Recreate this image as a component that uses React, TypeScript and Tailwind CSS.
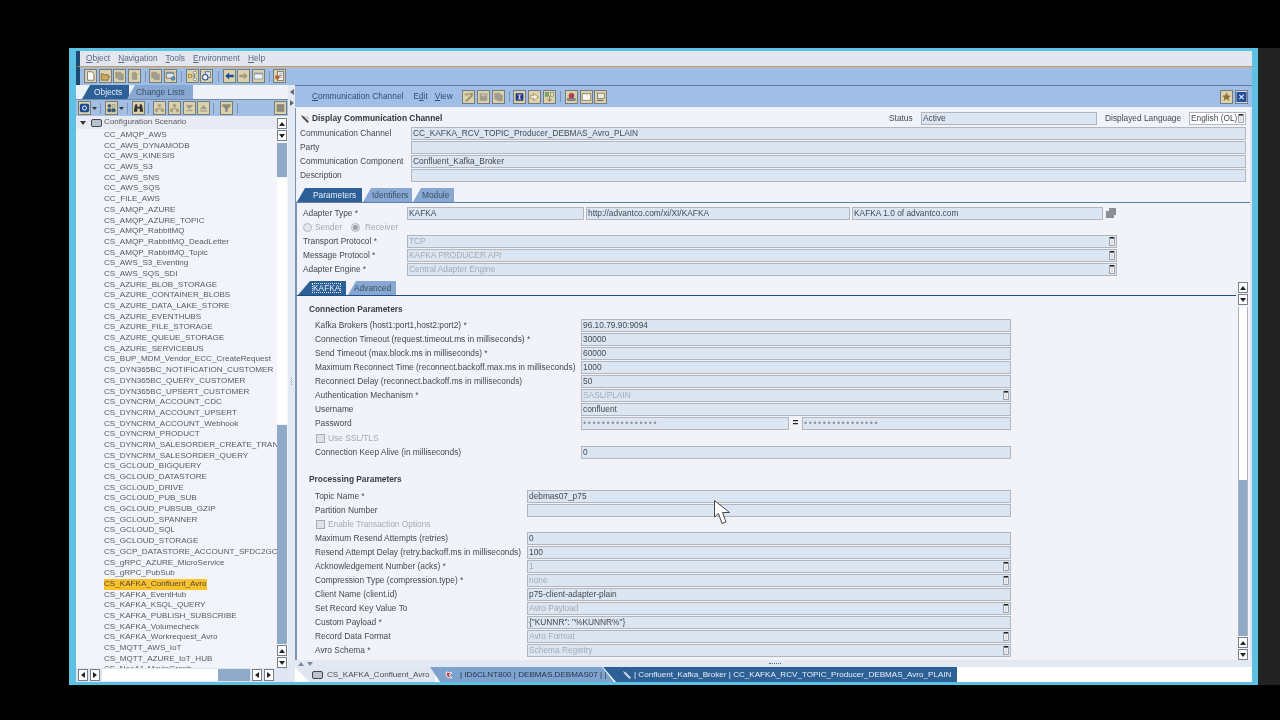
import type { ReactNode } from 'react'

const treeItems = [
  'CC_AMQP_AWS', 'CC_AWS_DYNAMODB', 'CC_AWS_KINESIS', 'CC_AWS_S3', 'CC_AWS_SNS', 'CC_AWS_SQS', 'CC_FILE_AWS',
  'CS_AMQP_AZURE', 'CS_AMQP_AZURE_TOPIC', 'CS_AMQP_RabbitMQ', 'CS_AMQP_RabbitMQ_DeadLetter', 'CS_AMQP_RabbitMQ_Topic',
  'CS_AWS_S3_Eventing', 'CS_AWS_SQS_SDI', 'CS_AZURE_BLOB_STORAGE', 'CS_AZURE_CONTAINER_BLOBS', 'CS_AZURE_DATA_LAKE_STORE',
  'CS_AZURE_EVENTHUBS', 'CS_AZURE_FILE_STORAGE', 'CS_AZURE_QUEUE_STORAGE', 'CS_AZURE_SERVICEBUS',
  'CS_BUP_MDM_Vendor_ECC_CreateRequest', 'CS_DYN365BC_NOTIFICATION_CUSTOMER', 'CS_DYN365BC_QUERY_CUSTOMER',
  'CS_DYN365BC_UPSERT_CUSTOMER', 'CS_DYNCRM_ACCOUNT_CDC', 'CS_DYNCRM_ACCOUNT_UPSERT', 'CS_DYNCRM_ACCOUNT_Webhook',
  'CS_DYNCRM_PRODUCT', 'CS_DYNCRM_SALESORDER_CREATE_TRAN', 'CS_DYNCRM_SALESORDER_QUERY', 'CS_GCLOUD_BIGQUERY',
  'CS_GCLOUD_DATASTORE', 'CS_GCLOUD_DRIVE', 'CS_GCLOUD_PUB_SUB', 'CS_GCLOUD_PUBSUB_GZIP', 'CS_GCLOUD_SPANNER',
  'CS_GCLOUD_SQL', 'CS_GCLOUD_STORAGE', 'CS_GCP_DATASTORE_ACCOUNT_SFDC2GC', 'CS_gRPC_AZURE_MicroService', 'CS_gRPC_PubSub',
  'CS_KAFKA_Confluent_Avro', 'CS_KAFKA_EventHub', 'CS_KAFKA_KSQL_QUERY', 'CS_KAFKA_PUBLISH_SUBSCRIBE', 'CS_KAFKA_Volumecheck',
  'CS_KAFKA_Workrequest_Avro', 'CS_MQTT_AWS_IoT', 'CS_MQTT_AZURE_IoT_HUB', 'CS_Neo4J_MovieGraph',
]

const connectionRows = [
  { label: 'Kafka Brokers (host1:port1,host2:port2) *', value: '96.10.79.90:9094' },
  { label: 'Connection Timeout (request.timeout.ms in milliseconds) *', value: '30000' },
  { label: 'Send Timeout (max.block.ms in milliseconds) *', value: '60000' },
  { label: 'Maximum Reconnect Time (reconnect.backoff.max.ms in milliseconds)', value: '1000' },
  { label: 'Reconnect Delay (reconnect.backoff.ms in milliseconds)', value: '50' },
  { label: 'Authentication Mechanism *', value: 'SASL/PLAIN', disabled: true },
  { label: 'Username', value: 'confluent' },
]

const processingRows = [
  { label: 'Maximum Resend Attempts (retries)', value: '0' },
  { label: 'Resend Attempt Delay (retry.backoff.ms in milliseconds)', value: '100' },
  { label: 'Acknowledgement Number (acks) *', value: '1', disabled: true },
  { label: 'Compression Type (compression.type) *', value: 'none', disabled: true },
  { label: 'Client Name (client.id)', value: 'p75-client-adapter-plain' },
  { label: 'Set Record Key Value To', value: 'Avro Payload', disabled: true },
  { label: 'Custom Payload *', value: '{"KUNNR": "%KUNNR%"}' },
  { label: 'Record Data Format', value: 'Avro Format', disabled: true },
  { label: 'Avro Schema *', value: 'Schema Registry', disabled: true },
]

const icons = {
  page: <path d="M3 1.500h5l2.500 2.500v7.500H3z" fill="#fff" stroke="#555" strokeWidth="0.8" />,
  folder: <path d="M1.500 4h3l1 1h4v2h2l-2 4.500H1.500z" fill="#c9a860" stroke="#6b5a35" strokeWidth="0.8" />,
  copy: <path d="M2 2h6v2h3v7H5V9H2z" fill="#a09c8e" stroke="#918d80" strokeWidth="0.6" />,
  trash: <path d="M3 3h7v1H9.500v7h-6V4H3zM5 1.500h3V3H5z" fill="#a09c8e" />,
  copyX: (
    <>
      <rect x="1.500" y="2" width="9" height="7" fill="#dfe6ee" stroke="#555" strokeWidth="0.8" />
      <rect x="1.500" y="2" width="9" height="2" fill="#7f8f9f" />
      <circle cx="9.500" cy="9.500" r="2.500" fill="#2b5fa5" />
      <path d="M8.400 8.400l2.200 2.200M10.600 8.400l-2.200 2.200" stroke="#fff" strokeWidth="0.7" />
    </>
  ),
  tree: (
    <>
      <rect x="1.500" y="4.500" width="4" height="4" fill="#f3d268" stroke="#7a6a35" strokeWidth="0.7" />
      <path d="M6 6.500h3M9 3v7" stroke="#666" strokeWidth="0.8" />
      <rect x="8" y="1.500" width="3.500" height="2.500" fill="#fff" stroke="#555" strokeWidth="0.6" />
      <rect x="8" y="9" width="3.500" height="2.500" fill="#fff" stroke="#555" strokeWidth="0.6" />
    </>
  ),
  cycleDoc: (
    <>
      <rect x="5" y="1.500" width="6" height="7" fill="#dfe8f3" stroke="#31588c" strokeWidth="0.8" />
      <circle cx="5" cy="8" r="3.200" fill="#fff" stroke="#1f4f93" strokeWidth="1.200" />
    </>
  ),
  left: <path d="M1.500 6.500L6 2.500v2.500h5.500v3H6v2.500z" fill="#1d4f9c" />,
  right: <path d="M11.500 6.500L7 2.500v2.500H1.500v3H7v2.500z" fill="#a49b82" />,
  window: (
    <>
      <rect x="1.500" y="3" width="10" height="7" fill="#eef2f7" stroke="#7e8c9c" strokeWidth="0.8" />
      <rect x="1.500" y="3" width="10" height="1.600" fill="#7e9ec4" />
    </>
  ),
  form: (
    <>
      <rect x="4" y="1.500" width="7.500" height="10" fill="#fff" stroke="#444" strokeWidth="0.8" />
      <path d="M6 4h4M6 6h4M6 8h4" stroke="#444" strokeWidth="0.7" />
      <circle cx="4" cy="8" r="2.600" fill="#b8632c" />
    </>
  ),
  refresh: (
    <>
      <rect x="1" y="1.500" width="11" height="10" rx="2" fill="#1d4a94" />
      <circle cx="6.500" cy="6.500" r="2.400" fill="none" stroke="#fff" strokeWidth="1.100" />
    </>
  ),
  people: (
    <>
      <circle cx="4" cy="4" r="1.800" fill="#2b5c8f" stroke="#333" strokeWidth="0.4" />
      <circle cx="9" cy="4" r="1.800" fill="#e6e2d0" stroke="#333" strokeWidth="0.5" />
      <path d="M2 11V7.500h4V11zM7 11V7.500h4V11z" fill="#2b5c8f" stroke="#333" strokeWidth="0.4" />
    </>
  ),
  binoculars: <path d="M2 4l1-2h2v3h3V2h2l1 2 1 7H8V7H5v4H1z" fill="#333" />,
  hierarchy: <path d="M5 2h3v3H5zM1.500 8h3v3h-3zM8.500 8h3v3h-3zM6.500 5v2M3 8V7h7v1" fill="#a49b82" stroke="#a49b82" strokeWidth="0.5" />,
  down: (
    <>
      <path d="M2 3h9L6.500 8z" fill="#a09c8e" />
      <path d="M3 9.500h7" stroke="#a09c8e" strokeWidth="1.400" />
    </>
  ),
  up: (
    <>
      <path d="M2 8h9L6.500 3z" fill="#a09c8e" />
      <path d="M2 10h9" stroke="#a09c8e" strokeWidth="1.400" />
    </>
  ),
  filter: <path d="M1.500 2h10v2L8 7.500V11H5V7.500L1.500 4z" fill="#8d8a7e" />,
  stop: <rect x="2" y="2" width="9" height="9" fill="#8d8a80" />,
  pencil: <path d="M2 3.500l4-1 1 1-3.500 1zM3 11l7-7.500 1.500 1.500L4.500 12zM8 2h3.500v1.400H8z" fill="#a39a7a" stroke="#7d7458" strokeWidth="0.4" />,
  save: (
    <>
      <rect x="2" y="2" width="9" height="9" fill="#a09c8e" />
      <rect x="4" y="2.500" width="5" height="3" fill="#c3bfb0" />
    </>
  ),
  info: <path d="M2 2h9v9H2z M4 3.500v1h1.500v4H4v1h5v-1H7.500v-4H9v-1z" fill="#142e8c" fillRule="evenodd" />,
  link: <path d="M1.500 5h4V2.500L11 6.500l-5.500 4V8h-4z" fill="#fdf7e0" stroke="#7a6a35" strokeWidth="0.7" />,
  swap: (
    <>
      <rect x="1.500" y="1.500" width="4" height="4" fill="#79b06f" stroke="#3e6c3a" strokeWidth="0.5" />
      <rect x="7.500" y="1.500" width="4" height="4" fill="#dbe6a8" stroke="#555" strokeWidth="0.5" />
      <path d="M6.500 6v5M4 9l2.500 2.500L9 9" fill="none" stroke="#555" strokeWidth="0.8" />
    </>
  ),
  stamp: (
    <>
      <circle cx="6.500" cy="5" r="3" fill="#bc3f4f" stroke="#5c2130" strokeWidth="0.5" />
      <rect x="2" y="8" width="9" height="3" fill="#8c8f9c" stroke="#444" strokeWidth="0.4" />
    </>
  ),
  book: <path d="M1.500 2.500h4.500l.5 1 .5-1h4.500v8H7l-.5 .6-.5-.6H1.500z" fill="#fffdf0" stroke="#444" strokeWidth="0.7" />,
  note: (
    <>
      <rect x="3" y="2" width="8" height="6.500" fill="#e9eadd" stroke="#555" strokeWidth="0.7" />
      <path d="M2 10.500h8" stroke="#555" strokeWidth="1.100" />
    </>
  ),
  star: <path d="M6.500 1l1.500 3.600 3.700.3-2.800 2.400.9 3.700-3.300-2-3.300 2 .9-3.700L1.300 4.900 5 4.600z" fill="#8f6f3c" />,
  close: (
    <>
      <rect x="0.500" y="0.500" width="12" height="12" fill="#234f9b" />
      <path d="M4 4l5 5M9 4l-5 5" stroke="#e6eef8" strokeWidth="1.400" />
    </>
  ),
}

function Btn({ icon, className = '' }: { icon: ReactNode; className?: string }) {
  return (
    <div className={`w-[13px] h-[14px] shrink-0 border border-[#747c80] bg-[#dbd1aa] ${className}`}>
      <svg viewBox="0 0 13 13" className="w-full h-full block">{icon}</svg>
    </div>
  )
}

function Sep({ className = '' }: { className?: string }) {
  return <div className={`w-px h-[11px] bg-[#7e96b5] shrink-0 ${className}`}></div>
}

function Arrow({ up }: { up?: boolean }) {
  return (
    <div className="w-[10px] h-[11px] shrink-0 bg-white border border-[#77818d] flex items-center justify-center">
      <svg viewBox="0 0 6 4" className="w-[6px] h-[4px]">
        <path d={up ? 'M0 4L3 0l3 4z' : 'M0 0l3 4 3-4z'} fill="#222" />
      </svg>
    </div>
  )
}

function SideArrow({ right, className = '' }: { right?: boolean; className?: string }) {
  return (
    <div className={`w-[10px] h-[12px] shrink-0 bg-white border border-[#77818d] flex items-center justify-center ${className}`}>
      <svg viewBox="0 0 4 6" className="w-[4px] h-[6px]">
        <path d={right ? 'M0 0l4 3-4 3z' : 'M4 0L0 3l4 3z'} fill="#222" />
      </svg>
    </div>
  )
}

function DropIcon() {
  return (
    <svg viewBox="0 0 6 9" className="w-[6px] h-[9px] block">
      <rect x="0.500" y="0.500" width="5" height="8" fill="#eef1f4" stroke="#8a8f96" strokeWidth="0.8" />
      <rect x="1" y="0" width="4" height="1.600" fill="#222" />
      <path d="M2 4h2M2 6h2" stroke="#a9adb3" strokeWidth="0.6" />
    </svg>
  )
}

function Field({ value, className = '', disabled, drop, dotted }: {
  value?: string
  className?: string
  disabled?: boolean
  drop?: boolean
  dotted?: boolean
}) {
  return (
    <div className={`h-[13px] shrink-0 border border-[#b1b6bf] bg-[#dce6f3] flex items-center pl-px pr-px overflow-hidden whitespace-nowrap ${disabled ? 'text-[#a4aab3]' : 'text-[#45494f]'} ${className}`}>
      {dotted ? <span className="text-[#8f959e] tracking-[1.55px] text-[9px]">{value}</span> : <span className="leading-[11px]">{value}</span>}
      {drop && <span className="ml-auto shrink-0"><DropIcon /></span>}
    </div>
  )
}

function Tab({ label, className, textClass, width, pad }: {
  label: string
  className: string
  textClass: string
  width: string
  pad: string
}) {
  return (
    <div className={`h-full shrink-0 flex items-center [clip-path:polygon(8px_0,100%_0,100%_100%,0_100%)] ${className} ${width} ${pad}`}>
      <span className={textClass}>{label}</span>
    </div>
  )
}

function Row({ label, labelWidth, children, className = '' }: {
  label: string
  labelWidth: string
  children: ReactNode
  className?: string
}) {
  return (
    <div className={`h-[14px] flex items-center whitespace-nowrap ${className}`}>
      <div className={`shrink-0 leading-[12px] ${labelWidth}`}>{label}</div>
      {children}
    </div>
  )
}

function CheckRow({ label, className = '' }: { label: string; className?: string }) {
  return (
    <div className={`h-[14px] flex items-center pl-px text-[#a4aab3] ${className}`}>
      <div className="w-[9px] h-[9px] mr-[3px] border border-[#a9adb3] bg-[#dfe1e6]"></div>
      {label}
    </div>
  )
}

function Tree() {
  return (
    <div className="flex-1 min-h-0 flex bg-[#f2f4f9]">
      <div className="flex-1 min-w-0 overflow-hidden text-[#555b62] text-[8.1px]">
        <div className="h-[13px] mb-px flex items-center pl-[4px] bg-[#e8ebf3]">
          <svg viewBox="0 0 6 4" className="w-[6px] h-[4px] mr-[5px]"><path d="M0 0h6L3 4z" fill="#333" /></svg>
          <svg viewBox="0 0 11 8" className="w-[11px] h-[8px] mr-[2px]">
            <rect x="0.500" y="0.500" width="10" height="7" rx="1.500" fill="#b9c3cf" stroke="#444" />
          </svg>
          Configuration Scenario
        </div>
        {treeItems.map((item) => (
          <div key={item} className="h-[10.69px] flex items-center pl-[28px] whitespace-nowrap">
            <span className={item === 'CS_KAFKA_Confluent_Avro' ? 'bg-[#fcc22c] text-[#4a4a3a] pr-[1px] leading-[10.69px]' : 'leading-[10.69px]'}>{item}</span>
          </div>
        ))}
      </div>
      <div className="w-[11px] shrink-0 flex flex-col pt-[2px] gap-px">
        <Arrow up />
        <Arrow />
        <div className="h-[34px] w-[10px] bg-[#8fa9c8] mt-[1px] shrink-0"></div>
        <div className="h-[246px] w-[10px] bg-white shrink-0"></div>
        <div className="flex-1 w-[10px] bg-[#8fa9c8]"></div>
        <Arrow up />
        <Arrow />
      </div>
    </div>
  )
}

function LeftPanel() {
  return (
    <div className="w-[212px] shrink-0 flex flex-col bg-[#dfe6f1]">
      <div className="h-[14px] pl-[6px] flex bg-[#eef1f7] text-white">
        <Tab label="Objects" className="bg-[#2c6097]" textClass="text-[#e8eff7]" width="w-[47px]" pad="pl-[12px]" />
        <Tab label="Change Lists" className="bg-[#86a8d2] -ml-[2px]" textClass="text-[#3d4f66]" width="w-[66px]" pad="pl-[9px]" />
      </div>
      <div className="h-[17px] bg-[#a3c0e4] flex items-center pl-[2px] border-t border-[#6f8cb0]">
        <Btn icon={icons.refresh} />
        <svg viewBox="0 0 5 3" className="w-[5px] h-[3px] ml-px"><path d="M0 0h5L2.500 3z" fill="#333" /></svg>
        <Sep className="ml-[3px]" />
        <Btn icon={icons.people} className="ml-[4px]" />
        <svg viewBox="0 0 5 3" className="w-[5px] h-[3px] ml-px"><path d="M0 0h5L2.500 3z" fill="#333" /></svg>
        <Sep className="ml-[3px]" />
        <Btn icon={icons.binoculars} className="ml-[4px]" />
        <Sep className="ml-[3px]" />
        <Btn icon={icons.hierarchy} className="ml-[4px]" />
        <Btn icon={icons.hierarchy} className="ml-[2px]" />
        <Btn icon={icons.down} className="ml-[2px]" />
        <Btn icon={icons.up} className="ml-[1px]" />
        <Sep className="ml-[3px]" />
        <Btn icon={icons.filter} className="ml-[6px]" />
        <Sep className="ml-[4px]" />
        <Btn icon={icons.stop} className="ml-auto mr-[1px]" />
      </div>
      <Tree />
      <div className="h-[14px] shrink-0 flex items-center pl-[2px] bg-[#dfe6f1]">
        <SideArrow />
        <SideArrow right className="ml-[2px]" />
        <div className="flex ml-[2px] h-[12px] w-[148px]">
          <div className="w-[116px] bg-white"></div>
          <div className="flex-1 bg-[#8fa9c8]"></div>
        </div>
        <SideArrow className="ml-[2px]" />
        <SideArrow right className="ml-[2px]" />
      </div>
    </div>
  )
}

function Divider() {
  return (
    <div className="w-[7px] shrink-0 bg-[#e3e9f3] flex flex-col items-center pt-[4px]">
      <svg viewBox="0 0 4 6" className="w-[4px] h-[6px]"><path d="M4 0L0 3l4 3z" fill="#666" /></svg>
      <svg viewBox="0 0 4 6" className="w-[4px] h-[6px] mt-[5px]"><path d="M0 0l4 3-4 3z" fill="#666" /></svg>
      <div className="mt-[272px] flex flex-col gap-px">
        <div className="w-px h-px bg-[#8a97a8]"></div>
        <div className="w-px h-px bg-[#8a97a8]"></div>
        <div className="w-px h-px bg-[#8a97a8]"></div>
        <div className="w-px h-px bg-[#8a97a8]"></div>
      </div>
    </div>
  )
}

function MenuText({ text }: { text: string }) {
  return (
    <span>
      <span className="underline">{text[0]}</span>
      {text.slice(1)}
    </span>
  )
}

function RightHeader() {
  return (
    <div className="h-[22px] shrink-0 bg-[#a1bfe6] border-t border-[#5f7ea8] flex items-center text-[#2f4d7a]">
      <div className="ml-[17px] w-[150px] flex gap-[10px]">
        <span><span className="underline">C</span>ommunication Channel</span>
        <span>E<span className="underline">d</span>it</span>
        <span className="-ml-[3px]"><MenuText text="View" /></span>
      </div>
      <Btn icon={icons.pencil} />
      <Btn icon={icons.save} className="ml-[2px] bg-[#c5c0ab]" />
      <Btn icon={icons.copy} className="ml-[2px]" />
      <Sep className="ml-[4px]" />
      <Btn icon={icons.info} className="ml-[3px]" />
      <Btn icon={icons.link} className="ml-[2px]" />
      <Btn icon={icons.swap} className="ml-[2px]" />
      <Sep className="ml-[4px]" />
      <Btn icon={icons.stamp} className="ml-[4px]" />
      <Btn icon={icons.book} className="ml-[2px]" />
      <Btn icon={icons.note} className="ml-[1px]" />
      <Btn icon={icons.star} className="ml-auto" />
      <Btn icon={icons.close} className="ml-[2px] mr-[4px] bg-[#dfe6f1]" />
    </div>
  )
}

function FormScroller() {
  return (
    <div className="flex-1 min-h-0 flex mt-[5px]">
      <div className="flex-1 min-w-0 flex flex-col">
        <div className="h-[14px] shrink-0 pl-[1px] flex">
          <div className="w-[48px] h-full flex items-center pl-[15px] bg-[#2c6097] text-[#e8eff7] [clip-path:polygon(12px_0,100%_0,100%_100%,0_100%)]">
            <span className="outline outline-1 outline-dotted outline-[#dfe8f3]">KAFKA</span>
          </div>
          <Tab label="Advanced" className="bg-[#86a8d2] ml-[2px]" textClass="text-[#3d4f66]" width="w-[48px]" pad="pl-[6px]" />
        </div>
        <div className="h-px shrink-0 bg-[#1e4c86]"></div>
        <div className="flex-1 min-h-0 overflow-hidden pl-[12px] pt-[6px] text-[#45494f]">
          <div className="h-[14px] flex items-center font-bold text-[#3a3d42]">Connection Parameters</div>
          <div className="pl-[6px] mt-[2px]">
            {connectionRows.map((r) => (
              <Row key={r.label} label={r.label} labelWidth="w-[266px]">
                <Field value={r.value} disabled={r.disabled} drop={r.disabled} className="w-[430px]" />
              </Row>
            ))}
            <Row label="Password" labelWidth="w-[266px]">
              <Field value="••••••••••••••••" dotted className="w-[208px]" />
              <span className="w-[13px] text-center font-bold text-[#222] text-[10px]">=</span>
              <Field value="••••••••••••••••" dotted className="w-[209px]" />
            </Row>
            <CheckRow label="Use SSL/TLS" className="mt-px" />
            <Row label="Connection Keep Alive (in milliseconds)" labelWidth="w-[266px]">
              <Field value="0" className="w-[430px]" />
            </Row>
          </div>
          <div className="h-[15px] mt-[13px] flex items-center font-bold text-[#3a3d42]">Processing Parameters</div>
          <div className="pl-[6px] mt-[2px]">
            <Row label="Topic Name *" labelWidth="w-[212px]">
              <Field value="debmas07_p75" className="w-[484px]" />
            </Row>
            <Row label="Partition Number" labelWidth="w-[212px]">
              <Field className="w-[484px]" />
            </Row>
            <CheckRow label="Enable Transaction Options" />
            {processingRows.map((r) => (
              <Row key={r.label} label={r.label} labelWidth="w-[212px]">
                <Field value={r.value} disabled={r.disabled} drop={r.disabled} className="w-[484px]" />
              </Row>
            ))}
          </div>
        </div>
      </div>
      <div className="w-[10px] shrink-0 ml-[2px] mr-[2px] pt-px flex flex-col gap-px">
        <Arrow up />
        <Arrow />
        <div className="flex-1 min-h-0 flex flex-col bg-white border-x border-[#aab2bd] mt-px">
          <div className="mt-auto h-[156px] bg-[#8fa9c8]"></div>
        </div>
        <Arrow up />
        <Arrow />
      </div>
    </div>
  )
}

function RightBody() {
  return (
    <div className="h-[552px] shrink-0 flex flex-col bg-[#f1f3f9] border-l border-[#7c93b2] mr-[2px] pt-[3px]">
      <div className="pl-[4px] pr-[4px]">
        <div className="h-[15px] flex items-center whitespace-nowrap">
          <svg viewBox="0 0 10 10" className="w-[10px] h-[10px] mr-[2px] shrink-0">
            <path d="M1 1l3 1.500 5 5-1.500 1.500-5-5z" fill="#555" />
            <path d="M6 2l3 3" stroke="#99a" strokeWidth="1" />
          </svg>
          <span className="w-[577px] font-bold text-[#33363a]">Display Communication Channel</span>
          <span className="w-[32px]">Status</span>
          <Field value="Active" className="w-[176px]" />
          <span className="w-[84px] ml-[8px]">Displayed Language</span>
          <Field value="English (OL)" drop className="w-[57px] bg-white" />
        </div>
        <Row label="Communication Channel" labelWidth="w-[111px]">
          <Field value="CC_KAFKA_RCV_TOPIC_Producer_DEBMAS_Avro_PLAIN" className="flex-1" />
        </Row>
        <Row label="Party" labelWidth="w-[111px]">
          <Field className="flex-1" />
        </Row>
        <Row label="Communication Component" labelWidth="w-[111px]">
          <Field value="Confluent_Kafka_Broker" className="flex-1" />
        </Row>
        <Row label="Description" labelWidth="w-[111px]">
          <Field className="flex-1" />
        </Row>
      </div>
      <div className="h-[14px] shrink-0 mt-[6px] pl-[1px] flex">
        <Tab label="Parameters" className="bg-[#2c6097]" textClass="text-[#e8eff7]" width="w-[65px]" pad="pl-[16px]" />
        <Tab label="Identifiers" className="bg-[#86a8d2] ml-px" textClass="text-[#3d4f66]" width="w-[49px]" pad="pl-[9px]" />
        <Tab label="Module" className="bg-[#86a8d2] ml-px" textClass="text-[#3d4f66]" width="w-[41px]" pad="pl-[9px]" />
      </div>
      <div className="h-px shrink-0 bg-[#5d7ea8]"></div>
      <div className="flex-1 min-h-0 flex flex-col border-l-2 border-[#7c93b2] -ml-px">
        <div className="pl-[6px] pt-[3px]">
          <Row label="Adapter Type *" labelWidth="w-[104px]">
            <Field value="KAFKA" className="w-[177px] bg-[#d8e5f0]" />
            <Field value="http://advantco.com/xi/XI/KAFKA" className="w-[264px] ml-[2px] bg-[#d8e5f0]" />
            <Field value="KAFKA 1.0 of advantco.com" className="w-[251px] ml-[2px] bg-[#d8e5f0]" />
            <svg viewBox="0 0 10 10" className="w-[10px] h-[10px] ml-[3px]">
              <path d="M3 0h7v7H8v3H0V3h3z" fill="#8a8f96" />
            </svg>
          </Row>
          <div className="h-[14px] flex items-center text-[#a4aab3]">
            <div className="w-[9px] h-[9px] rounded-full border border-[#b2b6bd] bg-[#e6e8ee]"></div>
            <span className="ml-[3px] w-[36px]">Sender</span>
            <div className="w-[9px] h-[9px] rounded-full border border-[#b2b6bd] bg-[#e6e8ee] flex items-center justify-center">
              <div className="w-[5px] h-[5px] rounded-full bg-[#9aa0a8]"></div>
            </div>
            <span className="ml-[5px]">Receiver</span>
          </div>
          <Row label="Transport Protocol *" labelWidth="w-[104px]">
            <Field value="TCP" disabled drop className="w-[710px]" />
          </Row>
          <Row label="Message Protocol *" labelWidth="w-[104px]">
            <Field value="KAFKA PRODUCER API" disabled drop className="w-[710px]" />
          </Row>
          <Row label="Adapter Engine *" labelWidth="w-[104px]">
            <Field value="Central Adapter Engine" disabled drop className="w-[710px]" />
          </Row>
        </div>
        <FormScroller />
      </div>
    </div>
  )
}

function BottomTabs() {
  return (
    <div className="h-[15px] shrink-0 flex bg-white text-[#4a4f55] text-[8.1px] whitespace-nowrap">
      <div className="w-[140px] shrink-0 flex items-center pl-[17px] pt-px bg-[#e0e7f2] [clip-path:polygon(0_0,100%_0,100%_100%,14px_100%)]">
        <svg viewBox="0 0 11 8" className="w-[11px] h-[8px] mr-[4px] shrink-0">
          <rect x="0.500" y="0.500" width="10" height="7" rx="1.500" fill="#b9c3cf" stroke="#444" />
        </svg>
        CS_KAFKA_Confluent_Avro
      </div>
      <div className="w-[184px] -ml-[5px] shrink-0 flex items-center pl-[14px] pt-px bg-[#7ea3cf] text-[#26354a] [clip-path:polygon(0_0,calc(100%-12px)_0,100%_100%,10px_100%)]">
        <svg viewBox="0 0 10 10" className="w-[10px] h-[10px] mr-[6px] shrink-0">
          <path d="M2 2l6 1-3 2 3 3-5-1z" fill="#c33c3c" stroke="#fff" strokeWidth="0.8" />
        </svg>
        | ID6CLNT800 | DEBMAS.DEBMAS07 | |
      </div>
      <div className="w-[354px] -ml-[11px] shrink-0 flex items-center pl-[19px] pt-px bg-[#2c6097] text-[#e8eff7] [clip-path:polygon(0_0,100%_0,100%_100%,13px_100%)]">
        <svg viewBox="0 0 10 10" className="w-[10px] h-[10px] mr-[2px] shrink-0">
          <path d="M1 1l3 1.500 5 5-1.500 1.500-5-5z" fill="#c8d4e4" />
        </svg>
        | Confluent_Kafka_Broker | CC_KAFKA_RCV_TOPIC_Producer_DEBMAS_Avro_PLAIN
      </div>
    </div>
  )
}

export default function App() {
  return (
    <div className="relative w-[1280px] h-[720px] bg-black overflow-hidden flex items-start pt-[48px] pl-[69px] font-['Liberation_Sans',Arial,sans-serif] text-[8.35px] leading-none text-[#45494f]">
      <div className="w-[1189px] h-[637px] shrink-0 bg-[#5cc1e2] pt-[3px] pb-[3px] pl-[7px] pr-[6px] blur-[0.35px]">
        <div className="h-full flex flex-col bg-[#dfe6f1]">
          {/* Menu */}
          <div className="h-[16px] shrink-0 flex items-center gap-[8px] pl-[6px] bg-[#e4e6ef] border-b border-[#d89a3d] border-l-4 border-l-[#1c4a74] text-[#5a6a86]">
            <MenuText text="Object" />
            <MenuText text="Navigation" />
            <MenuText text="Tools" />
            <MenuText text="Environment" />
            <MenuText text="Help" />
          </div>
          {/* Main toolbar */}
          <div className="h-[18px] shrink-0 flex items-center pl-[4px] bg-[#9dbde4] border-l-4 border-l-[#1c4a74]">
            <Btn icon={icons.page} />
            <Btn icon={icons.folder} className="ml-[2px]" />
            <Btn icon={icons.copy} className="ml-px" />
            <Btn icon={icons.trash} className="ml-[2px]" />
            <Sep className="ml-[4px]" />
            <Btn icon={icons.copy} className="ml-[3px] bg-[#c5c0ab]" />
            <Btn icon={icons.copyX} className="ml-[2px]" />
            <Sep className="ml-[4px]" />
            <Btn icon={icons.tree} className="ml-[4px]" />
            <Btn icon={icons.cycleDoc} className="ml-px" />
            <Sep className="ml-[5px]" />
            <Btn icon={icons.left} className="ml-[4px]" />
            <Btn icon={icons.right} className="ml-px" />
            <Btn icon={icons.window} className="ml-[2px] bg-[#c6d3e3]" />
            <Sep className="ml-[4px]" />
            <Btn icon={icons.form} className="ml-[3px]" />
          </div>
          <div className="flex-1 min-h-0 flex">
            <LeftPanel />
            <Divider />
            <div className="flex-1 min-w-0 flex flex-col">
              <RightHeader />
              <div className="h-px shrink-0 bg-[#e9eef6]"></div>
              <RightBody />
              <div className="h-[7px] shrink-0 flex items-center bg-[#e3e9f3] pl-[3px]">
                <svg viewBox="0 0 16 4" className="w-[16px] h-[4px]"><path d="M0 4l3-4 3 4zM9 0h6l-3 4z" fill="#7b8aa0" /></svg>
                <span className="ml-[455px] w-[12px] h-px border-t border-dotted border-[#5a6a86]"></span>
              </div>
              <BottomTabs />
            </div>
          </div>
        </div>
      </div>
      <div className="w-[22px] h-[637px] shrink-0 bg-[#232323]"></div>
      {/* mouse cursor */}
      <svg viewBox="0 0 16 25" className="absolute left-[714px] top-[500px] w-[16px] h-[25px]">
        <path d="M0.500 0.500V17l4-3.500 3.500 10 4-1.500-3.500-9.500h7z" fill="#fff" stroke="#333" strokeWidth="0.9" />
      </svg>
    </div>
  )
}
